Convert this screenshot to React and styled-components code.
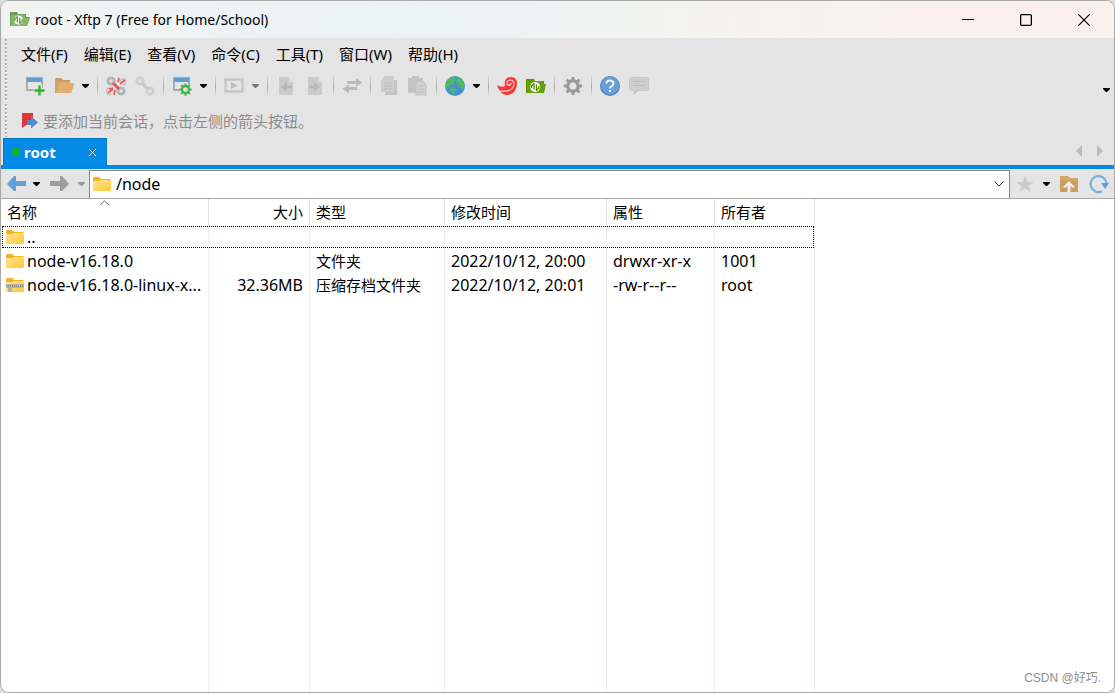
import React from 'react';
import styled, {createGlobalStyle} from 'styled-components';

const GlobalStyle = createGlobalStyle`
  * {
    box-sizing: border-box;
  }

  body {
    margin: 0;
    background: #dcdcdc;
    color: #000;
    font: 15px/20px 'Noto Sans', 'Noto Sans CJK SC', sans-serif;
  }

  button, input {
    margin: 0;
    padding: 0;
    border: 0;
    background: none;
    color: inherit;
    font: inherit;
  }

  svg {
    display: block;
    flex: none;
  }
`;

const Window = styled.div`
  position: relative;
  display: flex;
  flex-direction: column;
  height: 100vh;
  overflow: hidden;
  border: 1px solid #a9a9a9;
  border-radius: 9px;
  background: #e4e4e4;
`;

const TitleBar = styled.header`
  display: flex;
  align-items: center;
  height: 37px;
  padding: 0 1px 0 9px;
  background: linear-gradient(100deg, #f3f3f3 0%, #e9f3f7 36%, #f3f3f0 60%, #faf1ec 80%);
`;

const Title = styled.h1`
  flex: 1;
  margin: 0 0 0 5px;
  font-size: 14px;
  font-weight: 400;
`;

const WindowButton = styled.button`
  display: flex;
  align-items: center;
  justify-content: center;
  width: 58px;
  height: 36px;
`;

const Bar = styled.div`
  display: flex;
  align-items: center;
  height: ${props => props.$height}px;
  padding-left: 4px;
`;

const Gripper = styled.span`
  align-self: stretch;
  width: 2px;
  margin: 1px ${props => props.$gap}px 1px 0;
  background: repeating-linear-gradient(180deg, #b0b0b0 0 2px, #f6f6f6 2px 3px, transparent 3px 4px);
`;

const MenuList = styled.nav`
  display: flex;
  gap: 16px;
`;

const MenuButton = styled.button`
  white-space: nowrap;
`;

const ToolButton = styled.button`
  display: flex;
  align-items: center;
  justify-content: center;
  width: 29px;
  height: 26px;
`;

const CaretButton = styled.button`
  display: flex;
  align-items: center;
  justify-content: center;
  width: 15px;
  height: 26px;
`;

const Separator = styled.span`
  width: 8px;
  height: 20px;
  background: linear-gradient(180deg, #dcdcdc, #a8a8a8 50%, #dcdcdc) center / 1px 100% no-repeat;
`;

const Spacer = styled.span`
  flex: 1;
`;

const Overflow = styled.div`
  align-self: flex-end;
`;

const Hint = styled.p`
  margin: 0 0 0 3px;
  color: #8c8c8c;
`;

const TabStrip = styled.div`
  display: flex;
  align-items: flex-end;
  height: 31px;
  padding: 0 4px 0 2px;
  border-bottom: 4px solid #0389e3;
`;

const Tab = styled.div`
  display: flex;
  align-items: center;
  width: 104px;
  height: 27px;
  padding: 0 8px;
  border: 1px solid #0279c9;
  border-bottom: 0;
  background: #038be6;
  color: #fff;
`;

const TabLabel = styled.button`
  display: flex;
  flex: 1;
  align-items: center;
  gap: 4px;
  font-weight: 700;
`;

const Dot = styled.span`
  width: 8px;
  height: 8px;
  border-radius: 50%;
  background: #0db51a;
`;

const TabClose = styled.button`
  display: flex;
  align-items: center;
  justify-content: center;
  width: 12px;
  height: 20px;
`;

const TabScroll = styled.button`
  display: flex;
  align-items: center;
  justify-content: center;
  width: 21px;
  height: 28px;
`;

const AddressBar = styled.div`
  display: flex;
  align-items: center;
  height: 30px;
  padding: 0 1px 0 4px;
  border-bottom: 1px solid #a9a9a9;
`;

const NavButton = styled(ToolButton)`
  width: ${props => props.$width || 29}px;
`;

const PathBox = styled.label`
  display: flex;
  flex: 1;
  align-items: center;
  align-self: stretch;
  margin-top: 1px;
  padding: 0 3px 1px;
  border: 1px solid #888;
  border-bottom: 0;
  background: #fff;
`;

const PathInput = styled.input`
  flex: 1;
  min-width: 0;
  margin-left: 5px;
  outline: 0;
  font-size: 16px;
`;

const FilePane = styled.main`
  flex: 1;
  min-height: 0;
  background: #fff;
`;

const FileTable = styled.table`
  width: 814px;
  height: 100%;
  border-spacing: 0;
  table-layout: fixed;
`;

const HeadCell = styled.th`
  position: relative;
  height: 26px;
  padding: 0 6px;
  border-right: 1px solid #e3e3e3;
  font-weight: 400;
  text-align: ${props => props.$align || 'left'};
`;

const SortMark = styled.span`
  position: absolute;
  top: 1px;
  right: 0;
  left: 0;
  display: flex;
  justify-content: center;
`;

const FileRow = styled.tr`
  outline: ${props => (props.$focused ? '1px dotted #000' : 'none')};
  outline-offset: -2px;
`;

const Cell = styled.td`
  height: ${props => (props.$fill ? 'auto' : '24px')};
  padding: 0 6px;
  border-right: 1px solid #e6f0fb;
  font-size: ${props => (props.$latin ? 16 : 15)}px;
  text-align: ${props => props.$align || 'left'};
  white-space: nowrap;
`;

const FileName = styled.span`
  display: flex;
  align-items: center;
  gap: 3px;
  margin-left: -1px;
`;

const Watermark = styled.span`
  position: absolute;
  right: 13px;
  bottom: 4px;
  color: #8e8e8e;
  font: 12px/20px 'Liberation Sans', 'Noto Sans CJK SC', sans-serif;
`;

const Icon = ({size = 20, children, ...rest}) => (
  <svg width={size} height={size} viewBox="0 0 20 20" fill="none" aria-hidden="true" {...rest}>
    {children}
  </svg>
);

const Caret = ({color = '#000'}) => (
  <svg width="7" height="4" viewBox="0 0 7 4" aria-hidden="true">
    <path d="M0 0h7v1L4 4H3L0 1z" fill={color}/>
  </svg>
);

const NewSessionIcon = () => (
  <Icon>
    <path d="M1 1h17v14H1z" fill="#a6acb0"/>
    <path d="M2 2h15v4H2z" fill="#5b9fd8"/>
    <path d="M3 6h13v7H3z" fill="#e6e6e6"/>
    <path d="M14.500 8v12M8.500 14.500h11" stroke="#e4e4e4" strokeWidth="5"/>
    <path d="M14.500 9.500v10M9.500 14.500h10" stroke="#2db52d" strokeWidth="2.400"/>
  </Icon>
);

const OpenIcon = () => (
  <Icon>
    <path d="M1 3l1-1h5l2 2h7v3l4 1-3 9H1z" fill="#c99a5d"/>
    <path d="M1 17L5 7h15l-3 10z" fill="#dfb06f"/>
    <path d="M1 5v12l4-3V7h11V5z" fill="#d5a465"/>
  </Icon>
);

const Chain = ({color}) => (
  <g stroke={color}>
    <circle cx="5" cy="5" r="3.200" strokeWidth="2.800"/>
    <circle cx="15" cy="15" r="3.200" strokeWidth="2.800"/>
  </g>
);

const DisconnectIcon = () => (
  <Icon>
    <Chain color="#b2b5b6"/>
    <path d="M14 6a3 3 0 1 1 3 3M6 14a3 3 0 1 0-1 4" stroke="#c3c6c6" strokeWidth="2"/>
    <path d="M7 7l6 6" stroke="#e85454" strokeWidth="3"/>
    <path d="M12 6l1-4M14 8l5-4M3 13l4-1M2 17l5-4M8 19l1-5" stroke="#ea5a5a" strokeWidth="1.800"/>
  </Icon>
);

const ReconnectIcon = () => (
  <Icon>
    <Chain color="#cecece"/>
    <path d="M7 7l6 6" stroke="#c8c8c8" strokeWidth="3.600"/>
  </Icon>
);

const teeth = [0, 45, 90, 135, 180, 225, 270, 315];

const Gear = ({cx, cy, r, color}) => (
  <g transform={`translate(${cx} ${cy})`} stroke={color}>
    <circle r={r} strokeWidth={r * 0.65}/>
    {teeth.map(angle => (
      <path key={angle} d={`M0 ${-r}V${-r * 1.75}`} strokeWidth={r * 0.55} transform={`rotate(${angle})`}/>
    ))}
  </g>
);

const PropertiesIcon = () => (
  <Icon>
    <path d="M1 1h17v14H1z" fill="#a6acb0"/>
    <path d="M2 2h15v4H2z" fill="#5b9fd8"/>
    <path d="M3 6h13v7H3z" fill="#e6e6e6"/>
    <circle cx="13.500" cy="13.500" r="6" fill="#e4e4e4"/>
    <Gear cx={13.5} cy={13.5} r={3.5} color="#3fb54a"/>
  </Icon>
);

const RunIcon = () => (
  <Icon>
    <path d="M1.500 3.500h17v12h-17z" stroke="#c6c6c6" strokeWidth="2.400"/>
    <path d="M7 6l7 3.500L7 13z" fill="#bdbdbd"/>
  </Icon>
);

const PageArrowIcon = ({flip}) => (
  <Icon>
    <path d="M3 1h10l4 5v13H3z" fill="#cbcbcb"/>
    <path d="M13 1l4 5h-4z" fill="#dedede"/>
    <path
      d="M5 11l6-5v3.500h5v3h-5V16z"
      fill="#b8b8b8"
      transform={flip ? 'translate(20 0) scale(-1 1)' : undefined}
    />
  </Icon>
);

const SyncIcon = () => (
  <Icon>
    <path d="M5 5h9V2l6 4.500L14 11V8H5zM15 11H7V8.500L0 13l7 4v-3h8z" fill="#bababa"/>
  </Icon>
);

const CopyIcon = () => (
  <Icon>
    <path d="M8 4h10v15H6v-3h8V4z" fill="#c4c4c4"/>
    <path d="M6 0h9v16H2V5z" fill="#cecece"/>
    <path d="M5 7h8M5 10h8M5 13h8" stroke="#bdbdbd"/>
  </Icon>
);

const PasteIcon = () => (
  <Icon>
    <path d="M0 2h4V0h7v2h4v15H0z" fill="#c3c3c3"/>
    <path d="M8 5h7l3 4v10H8z" fill="#d0d0d0" stroke="#c0c0c0"/>
    <path d="M10 10h6M10 13h6M10 16h6" stroke="#bebebe"/>
  </Icon>
);

const GlobeIcon = () => (
  <Icon>
    <circle cx="10" cy="10" r="10" fill="#4a8fd6"/>
    <path d="M2 5c2-3 5-5 8-4l1 3-3 2 1 2-4 1-1 3-3-1c-1-2 0-4 1-6zM13 1c4 1 6 5 6 8l-1 5-3-2-1-3-3-2 1-4zM6 11l5 2-1 3-2 3-3-4z" fill="#4dbb62"/>
  </Icon>
);

const XshellIcon = () => (
  <Icon>
    <path d="M0 9c3 2 6 2 8 1-1-5 1-9 6-9 4 0 6 3 6 6 0 7-4 12-10 12-5 0-8-4-10-10z" fill="#f23a37"/>
    <path d="M3 15c7 1 14-1 14-7 0-5-7-5-7-1 0 3 4 3 4 0" stroke="#f6bdb9" strokeWidth="1.300"/>
  </Icon>
);

const Link = ({color}) => (
  <g stroke={color} strokeWidth="1.400">
    <path d="M8 7v6.500M8 7.500L5.500 10v2"/>
    <path d="M10.500 15V8.500M10.500 14.500L13 12v-2"/>
  </g>
);

const XftpIcon = () => (
  <Icon>
    <path d="M0 3h8l1 2h9v3h2l-2 9H0z" fill="#5d9000"/>
    <path d="M1 5h16v3h3l-3 9H1z" fill="#6b9f0c"/>
    <circle cx="9.200" cy="11" r="5" fill="#fff"/>
    <Link color="#5d9000"/>
  </Icon>
);

const TitleIcon = () => (
  <Icon>
    <path d="M0 2h7l1 2h8v3h4l-3 9H0z" fill="#6a9f53"/>
    <path d="M1 5h14v3h5l-3 8H1z" fill="#85b868"/>
    <circle cx="8.500" cy="10" r="4.500" fill="#fff"/>
    <g transform="translate(-.7 -1)"><Link color="#6da04f"/></g>
  </Icon>
);

const OptionsIcon = () => (
  <Icon>
    <Gear cx={10} cy={10} r={5.2} color="#989a9c"/>
  </Icon>
);

const HelpIcon = () => (
  <Icon>
    <circle cx="10" cy="10" r="10" fill="#5485b8"/>
    <circle cx="10" cy="9.500" r="9" fill="#6b9fd8"/>
    <path d="M6.500 7.500c0-4 7-4 7 0 0 2.500-3.500 2.500-3.500 5" stroke="#f1f5fa" strokeWidth="2"/>
    <path d="M9 14h2v2H9z" fill="#f1f5fa"/>
  </Icon>
);

const FeedbackIcon = () => (
  <Icon>
    <path d="M2 1h16l2 2v10l-2 2H9l-4 4v-4H2l-2-2V3z" fill="#c6c6c6"/>
    <path d="M2 2h16l1 1v10l-1 1H2l-1-1V3z" fill="#cecece"/>
    <path d="M4 5.500h12M4 9.500h12" stroke="#bcbcbc"/>
  </Icon>
);

const BookmarkIcon = () => (
  <Icon>
    <path d="M2 2h11v8l-5 3-6 4z" fill="#de353b"/>
    <path d="M7 9h4V5l7 6.500-7 6V14H7z" fill="#4f8ccc"/>
  </Icon>
);

const ArrowIcon = ({color, flip}) => (
  <Icon>
    <path
      d="M0 10l7-8h2v5h10v5H9v5H7z"
      fill={color}
      transform={flip ? 'translate(20 0) scale(-1 1)' : undefined}
    />
  </Icon>
);

const StarIcon = () => (
  <Icon size={18}>
    <path d="M10 1l2.500 6.500 7 .5-5.500 4.500L16 19l-6-4-6 4 2-6.500L.500 8l7-.500z" fill="#cbcbcb"/>
  </Icon>
);

const ParentIcon = () => (
  <Icon>
    <path d="M1 2h8l2 2h8v14H1z" fill="#d9a765"/>
    <path d="M1 6h18v12H1z" fill="#cc9d62"/>
    <path d="M10 7l6 6-2 1-2.500-2v6h-3v-6L6 14l-2-1z" fill="#f5eee6"/>
  </Icon>
);

const RefreshIcon = () => (
  <Icon>
    <path d="M13 17.300A8 8 0 1 1 17.500 9" stroke="#78aedd" strokeWidth="2.200"/>
    <path d="M12 9h8l-4 6z" fill="#5f9fd8"/>
  </Icon>
);

const FolderIcon = ({zipped}) => (
  <svg width="18" height="16" viewBox="0 0 18 16" aria-hidden="true">
    <defs>
      <linearGradient id="folder" x1="0" y1="0" x2="1" y2="1">
        <stop offset="0" stopColor="#ffe594"/>
        <stop offset="1" stopColor="#fec938"/>
      </linearGradient>
    </defs>
    <path d="M0 2l1-1h5l2 2h9l1 1v4H0z" fill="#f4b21b"/>
    <path d="M0 5h6l2-1h10v10l-1 1H1l-1-1z" fill="url(#folder)"/>
    {zipped && (
      <g>
        <path d="M0 7h18v4H6v4H2v-4H0z" fill="#b5b5ad"/>
        <path d="M0 9h18" stroke="#737373" strokeDasharray="1 1"/>
      </g>
    )}
  </svg>
);

const menus = ['文件(F)', '编辑(E)', '查看(V)', '命令(C)', '工具(T)', '窗口(W)', '帮助(H)'];

const tools = [
  [{title: '新建', icon: <NewSessionIcon/>}, {title: '打开', icon: <OpenIcon/>, caret: '#000'}],
  [{title: '断开', icon: <DisconnectIcon/>}, {title: '重新连接', icon: <ReconnectIcon/>}],
  [{title: '属性', icon: <PropertiesIcon/>, caret: '#000'}],
  [{title: '执行', icon: <RunIcon/>, caret: '#777'}],
  [{title: '下载', icon: <PageArrowIcon/>}, {title: '上传', icon: <PageArrowIcon flip/>}],
  [{title: '同步', icon: <SyncIcon/>}],
  [{title: '复制', icon: <CopyIcon/>}, {title: '粘贴', icon: <PasteIcon/>}],
  [{title: '编码', icon: <GlobeIcon/>, caret: '#000'}],
  [{title: 'Xshell', icon: <XshellIcon/>}, {title: 'Xftp', icon: <XftpIcon/>}],
  [{title: '选项', icon: <OptionsIcon/>}],
  [{title: '帮助', icon: <HelpIcon/>}, {title: '反馈', icon: <FeedbackIcon/>}]
];

const columns = [
  {title: '名称', width: 208, sorted: true},
  {title: '大小', width: 101, align: 'right'},
  {title: '类型', width: 135},
  {title: '修改时间', width: 162},
  {title: '属性', width: 108},
  {title: '所有者', width: 100}
];

const files = [
  {name: '..', focused: true},
  {
    name: 'node-v16.18.0',
    type: '文件夹',
    modified: '2022/10/12, 20:00',
    mode: 'drwxr-xr-x',
    owner: '1001'
  },
  {
    name: 'node-v16.18.0-linux-x...',
    size: '32.36MB',
    type: '压缩存档文件夹',
    modified: '2022/10/12, 20:01',
    mode: '-rw-r--r--',
    owner: 'root',
    zipped: true
  }
];

const Toolbar = () => (
  <Bar $height={34}>
    <Gripper $gap={13}/>
    {tools.map((group, index) => (
      <React.Fragment key={group[0].title}>
        {index > 0 && <Separator/>}
        {group.map(({title, icon, caret}) => (
          <React.Fragment key={title}>
            <ToolButton aria-label={title}>{icon}</ToolButton>
            {caret && <CaretButton aria-label={`${title}菜单`}><Caret color={caret}/></CaretButton>}
          </React.Fragment>
        ))}
      </React.Fragment>
    ))}
    <Spacer/>
    <Overflow>
      <CaretButton aria-label="更多"><Caret/></CaretButton>
    </Overflow>
  </Bar>
);

const Files = () => (
  <FileTable>
    <colgroup>
      {columns.map(({title, width}) => <col key={title} style={{width}}/>)}
    </colgroup>
    <thead>
      <tr>
        {columns.map(({title, align, sorted}) => (
          <HeadCell key={title} $align={align}>
            {title}
            {sorted && (
              <SortMark>
                <svg width="9" height="5" viewBox="0 0 9 5" fill="none" aria-hidden="true">
                  <path d="M0 5l4.500-4L9 5" stroke="#666"/>
                </svg>
              </SortMark>
            )}
          </HeadCell>
        ))}
      </tr>
    </thead>
    <tbody>
      {files.map(({name, size, type, modified, mode, owner, focused, zipped}) => (
        <FileRow key={name} $focused={focused}>
          <Cell $latin><FileName><FolderIcon zipped={zipped}/>{name}</FileName></Cell>
          <Cell $latin $align="right">{size}</Cell>
          <Cell>{type}</Cell>
          <Cell $latin>{modified}</Cell>
          <Cell $latin>{mode}</Cell>
          <Cell $latin>{owner}</Cell>
        </FileRow>
      ))}
      <tr>
        {columns.map(({title}) => <Cell key={title} $fill/>)}
      </tr>
    </tbody>
  </FileTable>
);

const App = () => (
  <Window>
    <GlobalStyle/>

    <TitleBar>
      <TitleIcon/>
      <Title>root - Xftp 7 (Free for Home/School)</Title>
      <WindowButton aria-label="最小化">
        <svg width="12" height="12" fill="none" stroke="#000"><path d="M0 5.500h12"/></svg>
      </WindowButton>
      <WindowButton aria-label="最大化">
        <svg width="12" height="12" fill="none" stroke="#000" strokeWidth="1.300">
          <rect x=".65" y=".65" width="10.700" height="10.700" rx="1"/>
        </svg>
      </WindowButton>
      <WindowButton aria-label="关闭">
        <svg width="12" height="12" fill="none" stroke="#000" strokeWidth="1.200"><path d="M0 0l12 12M12 0L0 12"/></svg>
      </WindowButton>
    </TitleBar>

    <Bar $height={31}>
      <Gripper $gap={14}/>
      <MenuList>
        {menus.map(menu => <MenuButton key={menu}>{menu}</MenuButton>)}
      </MenuList>
    </Bar>

    <Toolbar/>

    <Bar $height={35}>
      <Gripper $gap={13}/>
      <BookmarkIcon/>
      <Hint>要添加当前会话，点击左侧的箭头按钮。</Hint>
    </Bar>

    <TabStrip>
      <Tab>
        <TabLabel><Dot/>root</TabLabel>
        <TabClose aria-label="关闭标签">
          <svg width="7" height="7" stroke="#fff"><path d="M0 0l7 7M7 0L0 7"/></svg>
        </TabClose>
      </Tab>
      <Spacer/>
      <TabScroll aria-label="向左">
        <svg width="6" height="12" fill="#bcbcbc"><path d="M6 0v12L0 6z"/></svg>
      </TabScroll>
      <TabScroll aria-label="向右">
        <svg width="6" height="12" fill="#bcbcbc"><path d="M0 0v12l6-6z"/></svg>
      </TabScroll>
    </TabStrip>

    <AddressBar>
      <NavButton $width={24} aria-label="后退"><ArrowIcon color="#62a0d6"/></NavButton>
      <CaretButton aria-label="后退记录"><Caret/></CaretButton>
      <NavButton $width={30} aria-label="前进"><ArrowIcon color="#9d9d9d" flip/></NavButton>
      <CaretButton aria-label="前进记录"><Caret color="#999"/></CaretButton>
      <PathBox>
        <FolderIcon/>
        <PathInput aria-label="路径" defaultValue="/node"/>
        <svg width="14" height="10" viewBox="0 0 14 10" fill="none" stroke="#333" aria-hidden="true">
          <path d="M2.500 2.500L7 7l4.500-4.500"/>
        </svg>
      </PathBox>
      <NavButton aria-label="收藏"><StarIcon/></NavButton>
      <CaretButton aria-label="收藏夹"><Caret/></CaretButton>
      <NavButton $width={30} aria-label="上级目录"><ParentIcon/></NavButton>
      <NavButton aria-label="刷新"><RefreshIcon/></NavButton>
    </AddressBar>

    <FilePane>
      <Files/>
    </FilePane>

    <Watermark>CSDN @好巧.</Watermark>
  </Window>
);

export default App;
